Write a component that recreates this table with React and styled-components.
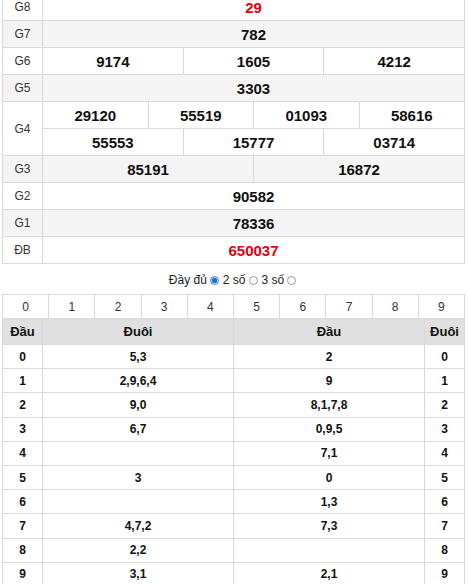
import React from 'react';
import styled, { createGlobalStyle } from 'styled-components';

const GlobalStyle = createGlobalStyle`
  html, body {
    margin: 0;
    padding: 0;
    background: #fff;
    font-family: 'Liberation Sans', Arial, sans-serif;
    color: #222;
    overflow: hidden;
  }
`;

const line = '#d9d9d9';

const Page = styled.div`
  width: 463px;
  margin: -7px 0 0 2px;
`;

const Board = styled.div`
  border-left: 1px solid ${line};
  border-top: 1px solid ${line};
`;

const PrizeRow = styled.div`
  display: grid;
  grid-template-columns: 40px 1fr;
  background: ${(p) => (p.$alt ? '#f4f4f4' : '#fff')};
`;

const Label = styled.div`
  display: flex;
  align-items: center;
  justify-content: center;
  border-right: 1px solid ${line};
  border-bottom: 1px solid ${line};
  font-size: 12px;
  color: #333;
`;

const Stack = styled.div`
  display: flex;
  flex-direction: column;
`;

const Numbers = styled.div`
  display: grid;
  grid-template-columns: repeat(${(p) => p.$n}, 1fr);
  height: 27px;
`;

const Num = styled.div`
  display: flex;
  align-items: center;
  justify-content: center;
  border-right: 1px solid ${line};
  border-bottom: 1px solid ${line};
  font-size: 15px;
  font-weight: bold;
  color: ${(p) => (p.$red ? '#e3000f' : '#111')};
`;

const Options = styled.div`
  height: 30px;
  display: flex;
  align-items: center;
  justify-content: center;
  padding-top: 2px;
  box-sizing: border-box;
  font-size: 12px;
  color: #222;
  gap: 2px;
`;

const Radio = styled.span`
  display: inline-block;
  width: 9px;
  height: 9px;
  box-sizing: border-box;
  border-radius: 50%;
  border: 1px solid ${(p) => (p.$on ? '#3b82d6' : '#9a9a9a')};
  background: ${(p) => (p.$on ? 'radial-gradient(circle, #1a6fd1 0 2.5px, #d6e6f8 3px)' : '#fff')};
  margin: 0 2px 0 1px;
`;

const Digits = styled.div`
  display: grid;
  grid-template-columns: repeat(10, 1fr);
  border-left: 1px solid ${line};
  border-top: 1px solid ${line};
`;

const Digit = styled.div`
  height: 23px;
  display: flex;
  align-items: center;
  justify-content: center;
  border-right: 1px solid ${line};
  border-bottom: 1px solid ${line};
  font-size: 12px;
  color: #333;
`;

const LotoRow = styled.div`
  display: grid;
  grid-template-columns: 40px 1fr 1fr 40px;
  border-left: 1px solid ${line};
  background: ${(p) => (p.$head ? '#e0e0e0' : '#fff')};
`;

const LotoCell = styled.div`
  height: ${(p) => (p.$head ? '26px' : '24.2px')};
  box-sizing: border-box;
  display: flex;
  align-items: center;
  justify-content: center;
  border-right: 1px solid ${line};
  border-bottom: 1px solid ${line};
  font-size: ${(p) => (p.$head ? '13px' : '12px')};
  font-weight: bold;
  color: #111;
`;

const prizes = [
  { label: 'G8', rows: [['29']], red: true },
  { label: 'G7', rows: [['782']] },
  { label: 'G6', rows: [['9174', '1605', '4212']] },
  { label: 'G5', rows: [['3303']] },
  { label: 'G4', rows: [['29120', '55519', '01093', '58616'], ['55553', '15777', '03714']] },
  { label: 'G3', rows: [['85191', '16872']] },
  { label: 'G2', rows: [['90582']] },
  { label: 'G1', rows: [['78336']] },
  { label: 'ĐB', rows: [['650037']], red: true },
];

const loto = [
  ['0', '5,3', '2', '0'],
  ['1', '2,9,6,4', '9', '1'],
  ['2', '9,0', '8,1,7,8', '2'],
  ['3', '6,7', '0,9,5', '3'],
  ['4', '', '7,1', '4'],
  ['5', '3', '0', '5'],
  ['6', '', '1,3', '6'],
  ['7', '4,7,2', '7,3', '7'],
  ['8', '2,2', '', '8'],
  ['9', '3,1', '2,1', '9'],
];

export default function App() {
  return (
    <>
      <GlobalStyle />
      <Page>
        <Board>
          {prizes.map((p, i) => (
            <PrizeRow key={p.label} $alt={i % 2 === 1}>
              <Label>{p.label}</Label>
              <Stack>
                {p.rows.map((r, j) => (
                  <Numbers key={j} $n={r.length}>
                    {r.map((n) => (
                      <Num key={n} $red={p.red}>{n}</Num>
                    ))}
                  </Numbers>
                ))}
              </Stack>
            </PrizeRow>
          ))}
        </Board>

        <Options>
          Đầy đủ <Radio $on /> 2 số <Radio /> 3 số <Radio />
        </Options>

        <Digits>
          {[0, 1, 2, 3, 4, 5, 6, 7, 8, 9].map((d) => (
            <Digit key={d}>{d}</Digit>
          ))}
        </Digits>
        <LotoRow $head>
          <LotoCell $head>Đầu</LotoCell>
          <LotoCell $head>Đuôi</LotoCell>
          <LotoCell $head>Đầu</LotoCell>
          <LotoCell $head>Đuôi</LotoCell>
        </LotoRow>
        {loto.map((r) => (
          <LotoRow key={r[0]}>
            {r.map((c, k) => (
              <LotoCell key={k}>{c}</LotoCell>
            ))}
          </LotoRow>
        ))}
      </Page>
    </>
  );
}
